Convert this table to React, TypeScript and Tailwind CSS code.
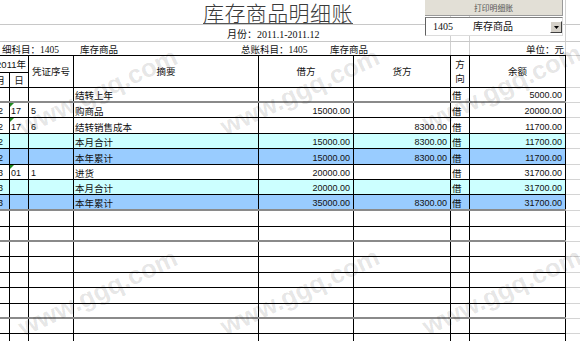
import React from 'react';

type Row = {
  h: string;
  gray?: boolean;
  m?: string;
  d?: string;
  v?: string;
  s?: string;
  dr?: string;
  cr?: string;
  dir?: string;
  bal?: string;
  bg?: string;
  tri?: boolean;
};

const rows: Row[] = [
  { h: 'h-[15px]', gray: true, s: '结转上年', dir: '借', bal: '5000.00' },
  { h: 'h-[15px]', m: '12', d: '17', v: '5', s: '购商品', dr: '15000.00', dir: '借', bal: '20000.00', tri: true },
  { h: 'h-[16px]', m: '12', d: '17', v: '6', s: '结转销售成本', cr: '8300.00', dir: '借', bal: '11700.00', tri: true },
  { h: 'h-[15px]', m: '12', s: '本月合计', dr: '15000.00', cr: '8300.00', dir: '借', bal: '11700.00', bg: 'bg-[#ccffff]' },
  { h: 'h-[16px]', m: '12', s: '本年累计', dr: '15000.00', cr: '8300.00', dir: '借', bal: '11700.00', bg: 'bg-[#99ccff]' },
  { h: 'h-[15px]', m: '13', d: '01', v: '1', s: '进货', dr: '20000.00', dir: '借', bal: '31700.00', tri: true },
  { h: 'h-[15px]', m: '13', s: '本月合计', dr: '20000.00', dir: '借', bal: '31700.00', bg: 'bg-[#ccffff]' },
  { h: 'h-[16px]', gray: true, m: '13', s: '本年累计', dr: '35000.00', cr: '8300.00', dir: '借', bal: '31700.00', bg: 'bg-[#99ccff]' },
  { h: 'h-[16px]' },
  { h: 'h-[15px]', gray: true },
  { h: 'h-[15px]' },
  { h: 'h-[16px]' },
  { h: 'h-[15px]' },
  { h: 'h-[16px]' },
  { h: 'h-[15px]', gray: true },
  { h: 'h-[15px]' },
  { h: 'h-[16px]' },
];

const marks = [
  'left-[98px] top-[92px]',
  'left-[300px] top-[92px]',
  'left-[502px] top-[88px]',
  'left-[98px] top-[293px]',
  'left-[300px] top-[292px]',
  'left-[502px] top-[292px]',
];

function GridTail() {
  return (
    <>
      <div className="w-[19px] border-l border-[#d0d0d0]" />
      <div className="w-[96px] border-l border-[#d0d0d0]" />
      <div className="flex-1 border-l border-[#d0d0d0]" />
    </>
  );
}

export default function App() {
  return (
    <div className="relative w-[580px] h-[341px] overflow-hidden bg-white text-[#111] font-['Liberation_Sans','Noto_Sans_CJK_SC',sans-serif]">
      {/* title row */}
      <div className="flex h-[25px] border-b border-[#c8c8c8]">
        <div className="w-[450px] flex items-end pl-[203px]">
          <span className="border-b border-[#555] text-[21px] leading-[22px] tracking-[0.4px] text-[#3a3a3a] font-['Noto_Sans_CJK_SC',sans-serif] font-light whitespace-nowrap">
            库存商品明细账
          </span>
        </div>
        <GridTail />
      </div>

      {/* period row */}
      <div className="flex h-[17px] border-b border-[#c8c8c8]">
        <div className="w-[450px] flex items-end pl-[227px] pb-[1px]">
          <span className="text-[10px] leading-[11px] font-['Liberation_Serif','Noto_Sans_CJK_SC',serif] whitespace-nowrap">
            月份：2011.1-2011.12
          </span>
        </div>
        <GridTail />
      </div>

      {/* account row */}
      <div className="flex h-[13px] text-[9.5px] leading-[10px] font-['Liberation_Serif','Noto_Sans_CJK_SC',serif] whitespace-nowrap">
        <div className="w-[450px] flex items-end">
          <span className="w-[80px] pl-[2px]">细科目：1405</span>
          <span className="w-[161px]">库存商品</span>
          <span className="w-[89px]">总账科目：1405</span>
          <span>库存商品</span>
        </div>
        <div className="w-[19px] border-l border-[#d0d0d0]" />
        <div className="w-[96px] border-l border-[#d0d0d0] flex items-end justify-end pr-[1px]">单位：元</div>
        <div className="flex-1 border-l border-[#d0d0d0]" />
      </div>

      {/* table header */}
      <div className="flex h-[33px]">
        <div className="flex w-[566px] border-y border-black text-[9.5px] leading-[11px] whitespace-nowrap">
          <div className="w-[29px] flex flex-col border-r border-black">
            <div className="h-[17px] flex items-center justify-end pr-[2px] border-b border-black overflow-hidden">2011年</div>
            <div className="flex-1 flex">
              <div className="w-[10px] border-r border-black flex items-center justify-end pr-[4px] overflow-hidden">月</div>
              <div className="flex-1 flex items-center justify-center">日</div>
            </div>
          </div>
          <div className="w-[45px] border-r border-black flex items-center justify-center">凭证序号</div>
          <div className="w-[185px] border-r border-black flex items-center justify-center">摘要</div>
          <div className="w-[95px] border-r border-black flex items-center justify-center">借方</div>
          <div className="w-[97px] border-r border-black flex items-center justify-center">货方</div>
          <div className="w-[19px] border-r border-black flex flex-col items-center justify-center leading-[13.4px]">
            <span>方</span>
            <span>向</span>
          </div>
          <div className="w-[96px] border-r border-black flex items-center justify-center">余额</div>
        </div>
        <div className="flex-1 border-y border-[#d4d4d4]" />
      </div>

      {/* data rows */}
      {rows.map((r, i) => (
        <div key={i} className={`flex ${r.h}`}>
          <div
            className={`flex w-[566px] ${r.bg ?? ''} ${r.gray ? 'border-b-2 border-[#8a8a8a]' : 'border-b border-black'} leading-[11px] whitespace-nowrap`}
          >
            <div className="w-[10px] border-r border-black flex items-end justify-end pr-[6px] overflow-hidden text-[9px]">{r.m}</div>
            <div className="relative w-[19px] border-r border-black flex items-end pl-[1px] text-[9px]">
              {r.tri && <span className="absolute left-0 top-0 w-0 h-0 border-t-[4px] border-r-[4px] border-t-[#1f8a1f] border-r-transparent" />}
              {r.d}
            </div>
            <div className="w-[45px] border-r border-black flex items-end pl-[2px] text-[9px]">{r.v}</div>
            <div className="w-[185px] border-r border-black flex items-end pl-[1px] text-[9.5px]">{r.s}</div>
            <div className="w-[95px] border-r border-black flex items-end justify-end pr-[3px] text-[9px]">{r.dr}</div>
            <div className="w-[97px] border-r border-black flex items-end justify-end pr-[3px] text-[9px]">{r.cr}</div>
            <div className="w-[19px] border-r border-black flex items-end pl-[1px] text-[9.5px]">{r.dir}</div>
            <div className="w-[96px] border-r border-black flex items-end justify-end pr-[3px] text-[9px]">{r.bal}</div>
          </div>
          <div className="flex-1 border-b border-[#d4d4d4]" />
        </div>
      ))}

      {/* print button */}
      <div className="absolute left-[425px] top-0 w-[138px] h-[16px] bg-[#e2dfd6] border-r border-b border-[#9a9a9a] flex items-center justify-center pt-[1px] text-[7.8px] leading-none text-[#555] font-['Noto_Sans_CJK_SC',sans-serif]">
        打印明细账
      </div>

      {/* combobox */}
      <div className="absolute left-[425px] top-[17px] w-[138px] h-[19px] bg-white border border-t-[#808080] border-l-[#606060] border-b-[#dcdcdc] border-r-[#dcdcdc] flex items-center text-[10px] leading-none font-['Liberation_Serif','Noto_Sans_CJK_SC',serif] whitespace-nowrap">
        <span className="ml-[7px] w-[40px]">1405</span>
        <span>库存商品</span>
        <div className="absolute right-0 top-[3px] w-[12px] h-[12px] bg-[#d4d0c8] border border-t-white border-l-white border-b-[#404040] border-r-[#404040] flex items-center justify-center">
          <svg width="5" height="3" viewBox="0 0 5 3">
            <path d="M0 0H5L2.5 3Z" fill="#000" />
          </svg>
        </div>
      </div>

      {/* watermarks */}
      {marks.map((m, i) => (
        <div
          key={i}
          className={`pointer-events-none absolute ${m} -translate-x-1/2 -translate-y-1/2 -rotate-[25deg] text-[25.5px] font-bold leading-none whitespace-nowrap text-black/[0.11] font-['Liberation_Sans',sans-serif]`}
        >
          www.ggq.com
        </div>
      ))}
    </div>
  );
}
